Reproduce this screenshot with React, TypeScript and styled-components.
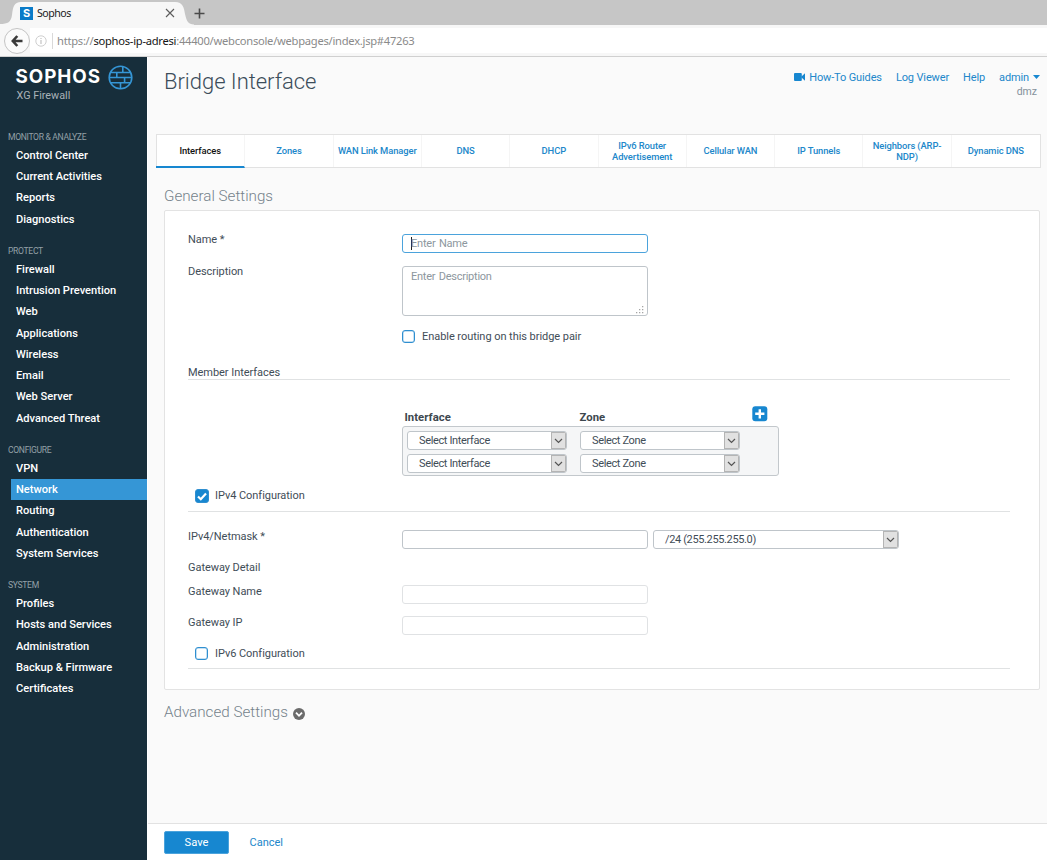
import React from "react";
import styled, { createGlobalStyle } from "styled-components";

const GlobalStyle = createGlobalStyle`
  * { box-sizing: border-box; }
  html, body { margin: 0; padding: 0; }
  body {
    width: 1047px; height: 860px; overflow: hidden; background: #fafafa;
    font-family: Roboto, "Liberation Sans", sans-serif; font-size: 11px; color: #3f4d57;
  }
`;

const Window = styled.div`
  display: flex; flex-direction: column; width: 1047px; height: 860px;
`;

/* Browser chrome */
const TabStrip = styled.div`
  display: flex; align-items: stretch; height: 25px; background: #c6c6c6; flex: none;
`;
const TabShape = styled.svg`
  position: absolute; left: 0; top: 0;
`;
const BrowserTab = styled.div`
  position: relative; width: 194px; height: 25px; display: flex; align-items: center; padding: 1px 19px 0 20px;
`;
const Favicon = styled.span`
  position: relative; width: 13px; height: 13px; background: #0a7bc8; color: #fff;
  font: 700 11px/13px Inter, "Liberation Sans", sans-serif; text-align: center;
`;
const TabTitle = styled.span`
  position: relative; margin-left: 4px; flex: 1; color: #1a1a1a; letter-spacing: -0.5px;
  font: 10.6px/14px "Noto Sans", sans-serif;
`;
const CloseIcon = styled.svg` position: relative; `;
const NewTabIcon = styled.svg` margin: 8px 0 0 0; `;

const AddressBar = styled.div`
  display: flex; align-items: center; height: 32px; flex: none; background: #f7f7f7;
  border-bottom: 1px solid #d0d0d0; padding-left: 4px;
`;
const BackButton = styled.div`
  width: 26px; height: 26px; border: 1px solid #c4c4c4; border-radius: 50%; background: #fbfbfb;
  display: flex; align-items: center; justify-content: center; flex: none;
`;
const UrlField = styled.div`
  flex: 1; height: 25px; background: #fff; display: flex; align-items: center; padding-left: 5px;
`;
const UrlDivider = styled.span` width: 1px; height: 16px; background: #d9d9d9; margin: 0 4px 0 5px; `;
const Url = styled.span`
  font: 11.2px/16px "Noto Sans", sans-serif; color: #8a8a8a; white-space: nowrap; letter-spacing: -0.27px;
  b { font-weight: 400; color: #151515; }
`;

/* Application shell */
const Shell = styled.div` display: flex; flex: 1; min-height: 0; `;
const Sidebar = styled.nav` width: 147px; background: #172e3b; flex: none; `;
const Brand = styled.div` height: 70.7px; padding: 7px 0 0 15.5px; `;
const LogoRow = styled.div` display: flex; align-items: center; height: 26px; `;
const LogoName = styled.span`
  font: 700 18.8px/28px Inter, Roboto, sans-serif; color: #fff; letter-spacing: 0.95px; width: 92.5px; white-space: nowrap;
`;
const Product = styled.div` font-size: 10.8px; line-height: 12px; color: #a9b2b8; margin: 0 0 0 1px; `;
const NavSection = styled.div` margin-bottom: 11.8px; `;
const NavHeading = styled.div`
  height: 17px; line-height: 18.6px; padding-left: 8px; font-size: 8.6px; color: #93a0a7; letter-spacing: -0.33px;
`;
const NavItem = styled.div<{ $active?: boolean }>`
  height: 21.3px; line-height: 22.1px; margin-left: 10.5px; padding-left: 5.5px; color: #fff; font-size: 11.1px;
  font-weight: 500; background: ${(p) => (p.$active ? "#3596d6" : "transparent")};
`;

const Main = styled.main`
  flex: 1; min-width: 0; display: flex; flex-direction: column; background: #fafafa; border-left: 1px solid #fff;
`;
const Header = styled.header` display: flex; justify-content: space-between; height: 77px; padding: 0 7px 0 16px; `;
const PageTitle = styled.h1`
  margin: 9px 0 0; font-size: 22px; line-height: 32px; font-weight: 300; color: #3c4d5a; letter-spacing: -0.03px;
`;
const HeaderRight = styled.div` padding-top: 12px; `;
const Links = styled.div`
  display: flex; gap: 14px; height: 16px; line-height: 15px; color: #2187ca; letter-spacing: -0.13px;
`;
const HeaderLink = styled.span` display: flex; align-items: center; gap: 4px; white-space: nowrap; `;
const Domain = styled.div` text-align: right; padding-right: 3px; color: #84919a; font-size: 10.5px; line-height: 14px; `;

const Tabs = styled.div`
  display: grid; grid-template-columns: repeat(10, 1fr); height: 34px; margin: 0 6px 0 8px;
  border: 1px solid #e2e2e2; background: #fff; flex: none;
`;
const Tab = styled.div<{ $active?: boolean }>`
  display: flex; align-items: center; justify-content: center; text-align: center; font-size: 9.4px; line-height: 10.5px;
  font-weight: 500; color: ${(p) => (p.$active ? "#111" : "#2187ca")}; border-right: 1px solid #f5f5f5; padding: 1px 2px 0;
  letter-spacing: -0.1px;
  ${(p) => p.$active && "border-bottom: 2px solid #1787d0; margin: 0 0 -1px -1px;"}
  &:last-child { border-right: 0; }
`;

const SectionTitle = styled.h2<{ $first?: boolean }>`
  display: flex; align-items: center; margin: 0; padding: ${(p) => (p.$first ? 14 : 0)}px 0 0 16px;
  height: ${(p) => (p.$first ? 42 : 44)}px; font-size: 15.2px; font-weight: 300; color: #75828b; gap: 5px; flex: none;
`;
const Card = styled.section`
  margin: 0 7px 0 16px; height: 480px; border: 1px solid #e3e3e3; border-radius: 2px; background: #fff;
  padding: 23px 29px 0 23px; flex: none; letter-spacing: -0.05px;
`;
const Row = styled.div<{ $h: number }>`
  display: grid; grid-template-columns: 214px 1fr; height: ${(p) => p.$h}px; align-items: start;
`;
const Label = styled.label<{ $drop?: boolean }>`
  line-height: 12px; white-space: nowrap; padding-top: ${(p) => (p.$drop ? 1 : 0)}px;
`;
const Controls = styled.div` display: flex; gap: 5px; align-items: center; `;
const Input = styled.div<{ $tone?: "focus" | "muted" }>`
  width: 246px; height: 19px; border-radius: 3px; background: #fff; color: #8d979e; display: flex; align-items: center;
  padding-left: 8px; letter-spacing: -0.22px; word-spacing: 1px;
  border: 1px solid ${(p) => (p.$tone === "focus" ? "#4ba3dc" : p.$tone === "muted" ? "#e0e2e4" : "#bfc5ca")};
`;
const Caret = styled.span` width: 1px; height: 13px; background: #222; margin-right: -1px; `;
const TextArea = styled.div`
  width: 246px; height: 50px; border: 1px solid #bfc5ca; border-radius: 3px; color: #8d979e; padding: 3px 3px 1px 8px;
  line-height: 13px; display: flex; justify-content: space-between; letter-spacing: -0.25px; word-spacing: 1px;
`;
const Grip = styled.svg` align-self: flex-end; `;
const CheckLine = styled.div<{ $indent?: number }>`
  display: flex; align-items: flex-start; gap: 6px; height: 14px; padding-left: ${(p) => p.$indent ?? 0}px;
  line-height: 14px;
`;
const Box = styled.span<{ $on?: boolean }>`
  width: ${(p) => (p.$on ? 14 : 13)}px; height: ${(p) => (p.$on ? 14 : 13)}px; border: 1px solid #2f8fd0;
  border-radius: 3px; background: ${(p) => (p.$on ? "#1787d0" : "#fff")};
  box-shadow: ${(p) => (p.$on ? "none" : "inset 0 0 0 0.5px #8cc2e8")};
  display: flex; align-items: center; justify-content: center; margin-right: ${(p) => (p.$on ? 0 : 1)}px;
`;
const Divided = styled.div<{ $h: number; $mb: number }>`
  height: ${(p) => p.$h}px; border-bottom: 1px solid #e0e2e3; margin-bottom: ${(p) => p.$mb}px;
`;
const MemberBlock = styled.div` margin-left: 214px; width: 377px; height: 83px; `;
const MemberHead = styled.div`
  display: grid; grid-template-columns: 175px 172.5px 16px; height: 20px; padding-left: 2.5px; font-weight: 700;
  line-height: 24px; font-size: 11.3px; color: #3d474e; letter-spacing: 0.05px;
`;
const MemberTable = styled.div`
  width: 377px; height: 50px; border: 1px solid #c3c8cc; border-radius: 3px; background: #f5f6f7; padding: 4px;
  display: grid; grid-template-columns: 160px 160px; column-gap: 13px; row-gap: 4px; align-content: start;
`;
const Select = styled.div<{ $w: number }>`
  width: ${(p) => p.$w}px; height: 19px; border: 1px solid #bfc5ca; border-radius: 3px; background: #fff;
  display: flex; align-items: center; justify-content: space-between; padding-left: 11px; overflow: hidden;
  letter-spacing: -0.36px;
`;
const SelectButton = styled.span`
  width: 15px; height: 17px; background: #e1e1e1; border: 1px solid #b4b4b4; display: flex; align-items: center;
  justify-content: center;
`;

const Spacer = styled.div` flex: 1; `;
const Footer = styled.footer`
  height: 37px; border-top: 1px solid #e2e2e2; background: #fff; display: flex; align-items: center; padding-left: 16px;
  flex: none; gap: 20.5px;
`;
const SaveButton = styled.div`
  width: 65px; height: 23px; border-radius: 2px; background: #1787d0; border: 1px solid #4ba3dc; color: #fff;
  text-align: center; line-height: 21px; font-size: 11.2px;
`;
const CancelLink = styled.span` color: #2187ca; `;

const sections = [
  { title: "MONITOR & ANALYZE", items: ["Control Center", "Current Activities", "Reports", "Diagnostics"] },
  {
    title: "PROTECT",
    items: ["Firewall", "Intrusion Prevention", "Web", "Applications", "Wireless", "Email", "Web Server", "Advanced Threat"],
  },
  { title: "CONFIGURE", items: ["VPN", "Network", "Routing", "Authentication", "System Services"] },
  { title: "SYSTEM", items: ["Profiles", "Hosts and Services", "Administration", "Backup & Firmware", "Certificates"] },
];

const tabs = [
  "Interfaces", "Zones", "WAN Link Manager", "DNS", "DHCP", "IPv6 Router Advertisement",
  "Cellular WAN", "IP Tunnels", "Neighbors (ARP-NDP)", "Dynamic DNS",
];

function Dropdown({ text, width }: { text: string; width: number }) {
  return (
    <Select $w={width}>
      <span>{text}</span>
      <SelectButton>
        <svg width="9" height="6" viewBox="0 0 9 6">
          <path d="M1 1 L4.5 4.5 L8 1" fill="none" stroke="#555" strokeWidth="1.2" />
        </svg>
      </SelectButton>
    </Select>
  );
}

export default function App() {
  return (
    <Window>
      <GlobalStyle />
      <TabStrip>
        <BrowserTab>
          <TabShape width="194" height="25">
            <path d="M0 25 V24 C8 24 11 22 12 15 C13 7 14 2 21 2 H175 C183 2 184 8 185 14 C187 22 188 24 194 24.5 V25 Z" fill="#f7f7f7" />
          </TabShape>
          <Favicon>S</Favicon>
          <TabTitle>Sophos</TabTitle>
          <CloseIcon width="10" height="10">
            <path d="M1 1 L9 9 M9 1 L1 9" stroke="#5c5c5c" strokeWidth="1.1" />
          </CloseIcon>
        </BrowserTab>
        <NewTabIcon width="11" height="11">
          <path d="M5.5 0.5 V10.5 M0.5 5.5 H10.5" stroke="#4a4a4a" strokeWidth="1.6" />
        </NewTabIcon>
      </TabStrip>
      <AddressBar>
        <BackButton>
          <svg width="12" height="12" viewBox="0 0 12 12">
            <path d="M6.3 1 L1.8 6 L6.3 11 M2 6 H11.5" fill="none" stroke="#3a3a3a" strokeWidth="2.6" />
          </svg>
        </BackButton>
        <UrlField>
          <svg width="12" height="12" viewBox="0 0 12 12">
            <circle cx="6" cy="6" r="5.2" fill="none" stroke="#cfcfcf" />
            <path d="M6 5 V9 M6 3 V4" stroke="#bdbdbd" strokeWidth="1.1" />
          </svg>
          <UrlDivider />
          <Url>https://<b>sophos-ip-adresi</b>:44400/webconsole/webpages/index.jsp#47263</Url>
        </UrlField>
      </AddressBar>

      <Shell>
        <Sidebar>
          <Brand>
            <LogoRow>
              <LogoName>SOPHOS</LogoName>
              <svg width="25" height="25" viewBox="0 0 25 25" fill="none" stroke="#3596d6" strokeWidth="1.6">
                <circle cx="12.5" cy="12.5" r="11.3" />
                <path d="M3 7.5 H22 M1.5 12.5 H23.5 M3 17.7 H22 M14.8 1.8 V7.5 M8.8 7.5 V12.5 M16.6 12.5 V17.7 M12.5 17.7 V23.5" />
              </svg>
            </LogoRow>
            <Product>XG Firewall</Product>
          </Brand>
          {sections.map((s) => (
            <NavSection key={s.title}>
              <NavHeading>{s.title}</NavHeading>
              {s.items.map((i) => (
                <NavItem key={i} $active={i === "Network"}>{i}</NavItem>
              ))}
            </NavSection>
          ))}
        </Sidebar>

        <Main>
          <Header>
            <PageTitle>Bridge Interface</PageTitle>
            <HeaderRight>
              <Links>
                <HeaderLink>
                  <svg width="11" height="8" viewBox="0 0 11 8" fill="#1787d0">
                    <rect width="7.8" height="8" rx="1" />
                    <path d="M7 4 L11 0.3 V7.7 Z" />
                  </svg>
                  How-To Guides
                </HeaderLink>
                <HeaderLink>Log Viewer</HeaderLink>
                <HeaderLink>Help</HeaderLink>
                <HeaderLink>
                  admin
                  <svg width="7" height="4" viewBox="0 0 7 4"><path d="M0 0 H7 L3.5 4 Z" fill="#1787d0" /></svg>
                </HeaderLink>
              </Links>
              <Domain>dmz</Domain>
            </HeaderRight>
          </Header>

          <Tabs>
            {tabs.map((t) => (
              <Tab key={t} $active={t === "Interfaces"}>{t}</Tab>
            ))}
          </Tabs>

          <SectionTitle $first>General Settings</SectionTitle>
          <Card>
            <Row $h={32}>
              <Label>Name *</Label>
              <Input $tone="focus"><Caret />Enter Name</Input>
            </Row>
            <Row $h={64}>
              <Label>Description</Label>
              <TextArea>
                Enter Description
                <Grip width="8" height="8" fill="#a5a5a5">
                  <path d="M6 0h1.3v1.3H6z M3 3h1.3v1.3H3z M6 3h1.3v1.3H6z M0 6h1.3v1.3H0z M3 6h1.3v1.3H3z M6 6h1.3v1.3H6z" />
                </Grip>
              </TextArea>
            </Row>
            <Row $h={36}>
              <span />
              <CheckLine><Box />Enable routing on this bridge pair</CheckLine>
            </Row>
            <Divided $h={14} $mb={26}><Label>Member Interfaces</Label></Divided>
            <MemberBlock>
              <MemberHead>
                <span>Interface</span>
                <span>Zone</span>
                <svg width="16" height="16" viewBox="0 0 16 16">
                  <rect x="0.3" y="0.3" width="15" height="15" rx="3" fill="#1787d0" />
                  <path d="M7.8 3.2 V12.4 M3.2 7.8 H12.4" stroke="#fff" strokeWidth="2.4" />
                </svg>
              </MemberHead>
              <MemberTable>
                <Dropdown text="Select Interface" width={160} />
                <Dropdown text="Select Zone" width={160} />
                <Dropdown text="Select Interface" width={160} />
                <Dropdown text="Select Zone" width={160} />
              </MemberTable>
            </MemberBlock>
            <Divided $h={23} $mb={18}>
              <CheckLine $indent={7}>
                <Box $on>
                  <svg width="10" height="9" viewBox="0 0 10 9"><path d="M1 4.5 L3.8 7.2 L9 1.5" fill="none" stroke="#fff" strokeWidth="2.2" /></svg>
                </Box>
                IPv4 Configuration
              </CheckLine>
            </Divided>
            <Row $h={31}>
              <Label $drop>IPv4/Netmask *</Label>
              <Controls><Input /><Dropdown text="/24 (255.255.255.0)" width={246} /></Controls>
            </Row>
            <Row $h={24}><Label $drop>Gateway Detail</Label></Row>
            <Row $h={31}><Label $drop>Gateway Name</Label><Input $tone="muted" /></Row>
            <Row $h={31}><Label $drop>Gateway IP</Label><Input $tone="muted" /></Row>
            <Divided $h={22} $mb={0}>
              <CheckLine $indent={7}><Box />IPv6 Configuration</CheckLine>
            </Divided>
          </Card>
          <SectionTitle>
            Advanced Settings
            <svg width="12" height="15" viewBox="0 -3 12 15">
              <circle cx="6" cy="6" r="6" fill="#6b6b6b" />
              <path d="M3 4.6 L6 7.8 L9 4.6" fill="none" stroke="#fff" strokeWidth="1.8" />
            </svg>
          </SectionTitle>
          <Spacer />
          <Footer>
            <SaveButton>Save</SaveButton>
            <CancelLink>Cancel</CancelLink>
          </Footer>
        </Main>
      </Shell>
    </Window>
  );
}
